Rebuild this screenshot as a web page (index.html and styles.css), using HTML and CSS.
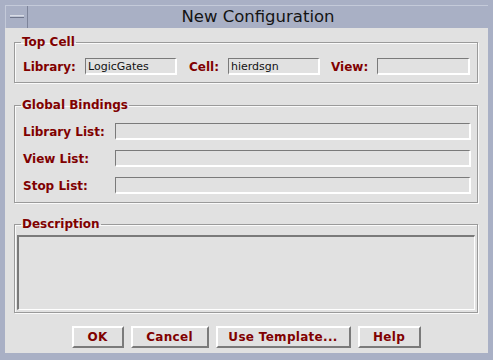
FILE: index.html
```html
<!DOCTYPE html>
<html lang="en">
<head>
    <meta charset="UTF-8">
    <title>New Configuration</title>
    <link rel="stylesheet" href="styles.css">
</head>
<body>
    <div class="window">
        <div class="titlebar">
            <div class="menu-btn"><span class="dash"></span></div>
            <div class="title">New Configuration</div>
        </div>
        <div class="content">
            <fieldset class="group top-cell">
                <legend>Top Cell</legend>
                <div class="cell-row">
                    <label class="lbl">Library:</label>
                    <input class="field w-lib" type="text" value="LogicGates">
                    <label class="lbl l-cell">Cell:</label>
                    <input class="field w-cell" type="text" value="hierdsgn">
                    <label class="lbl l-view">View:</label>
                    <input class="field w-view" type="text" value="">
                </div>
            </fieldset>

            <fieldset class="group bindings">
                <legend>Global Bindings</legend>
                <div class="bind-row">
                    <label class="lbl wide">Library List:</label>
                    <input class="field grow" type="text">
                </div>
                <div class="bind-row">
                    <label class="lbl wide">View List:</label>
                    <input class="field grow" type="text">
                </div>
                <div class="bind-row">
                    <label class="lbl wide">Stop List:</label>
                    <input class="field grow" type="text">
                </div>
            </fieldset>

            <fieldset class="group desc">
                <legend>Description</legend>
                <textarea class="field area"></textarea>
            </fieldset>

            <div class="buttons">
                <button class="btn b-ok">OK</button>
                <button class="btn b-cancel">Cancel</button>
                <button class="btn b-tmpl">Use Template...</button>
                <button class="btn b-help">Help</button>
            </div>
        </div>
    </div>
</body>
</html>
```

FILE: styles.css
```css
body{
    margin: 0;
    background: #a9b0c5;
    font-family: "DejaVu Sans", sans-serif;
}
.window{
    width: 493px;
    height: 360px;
    box-sizing: border-box;
    padding: 5px 5px 7px 5px;
    background: #a9b0c5;
    display: flex;
    flex-direction: column;
}
.titlebar{
    height: 23px;
    display: flex;
    border-top: 1px solid #c4cad9;
    box-sizing: border-box;
}
.menu-btn{
    width: 23px;
    height: 22px;
    box-sizing: border-box;
    border-right: 1px solid #7d849a;
    border-left: 1px solid #c4cad9;
}
.dash{
    display: block;
    width: 14px;
    height: 3px;
    margin: 9px 0 0 4px;
    background: #bfc5d5;
    border-bottom: 1px solid #6f768c;
    border-top: 1px solid #d8dce6;
    box-sizing: border-box;
}
.title{
    flex: 1;
    text-align: center;
    font-size: 16.5px;
    line-height: 22px;
    color: #141414;
}
.content{
    flex: 1;
    background: #e1e1e1;
    padding: 0 10px 0 9px;
    display: flex;
    flex-direction: column;
}
.group{
    margin: 0;
    border: 1px solid #9a9a9a;
    box-shadow: inset 1px 1px 0 #fafafa, 1px 1px 0 #fafafa;
    min-width: 0;
}
.group legend{
    font-size: 12px;
    line-height: 14px;
    font-weight: bold;
    color: #800000;
    padding: 0 1px;
}
.top-cell{
    margin-top: 7px;
    padding: 9px 7px 7px 6px;
}
.cell-row{
    display: flex;
    align-items: center;
}
.lbl{
    font-size: 12px;
    font-weight: bold;
    color: #800000;
    white-space: nowrap;
}
.cell-row .lbl:first-child{
    margin-left: 2px;
    width: 62px;
}
.l-cell{
    margin-left: 12px;
    width: 39px;
}
.l-view{
    margin-left: 11px;
    width: 46px;
}
.field{
    height: 17px;
    box-sizing: border-box;
    margin: 0;
    background: #e1e1e1;
    border-style: solid;
    border-width: 1px 2px 2px 1px;
    border-color: #7a7a7a #ffffff #ffffff #7a7a7a;
    font-family: "DejaVu Sans", sans-serif;
    font-size: 11px;
    color: #111;
    padding: 0 2px;
    outline: none;
}
.w-lib{ width: 92px; }
.w-cell{ width: 92px; }
.w-view{ width: 93px; }
.bindings{
    margin-top: 15px;
    padding: 11px 6px 8px 6px;
}
.bind-row{
    display: flex;
    align-items: center;
    margin-bottom: 10px;
}
.bind-row + .bind-row + .bind-row{
    margin-top: 1px;
}
.bind-row:last-child{
    margin-bottom: 0;
}
.wide{
    width: 92px;
    margin-left: 2px;
}
.grow{
    flex: 1;
}
.desc{
    margin-top: 14px;
    padding: 4px 2px 2px 2px;
}
.desc legend{
    margin-left: 4px;
}
.area{
    display: block;
    width: 100%;
    height: 75px;
    resize: none;
    border-width: 2px 1px 1px 2px;
    border-color: #7a7a7a #ffffff #ffffff #7a7a7a;
}
.buttons{
    display: flex;
    justify-content: center;
    gap: 7px;
    margin-top: 13px;
}
.btn{
    height: 22px;
    margin: 0;
    padding: 0;
    background: #e1e1e1;
    border-style: solid;
    border-width: 2px;
    border-color: #ffffff #7a7a7a #7a7a7a #ffffff;
    font-family: "DejaVu Sans", sans-serif;
    font-size: 12px;
    font-weight: bold;
    color: #800000;
    letter-spacing: 0.3px;
}
.b-ok{ width: 52px; }
.b-cancel{ width: 78px; }
.b-tmpl{ width: 135px; }
.b-help{ width: 63px; }
```
